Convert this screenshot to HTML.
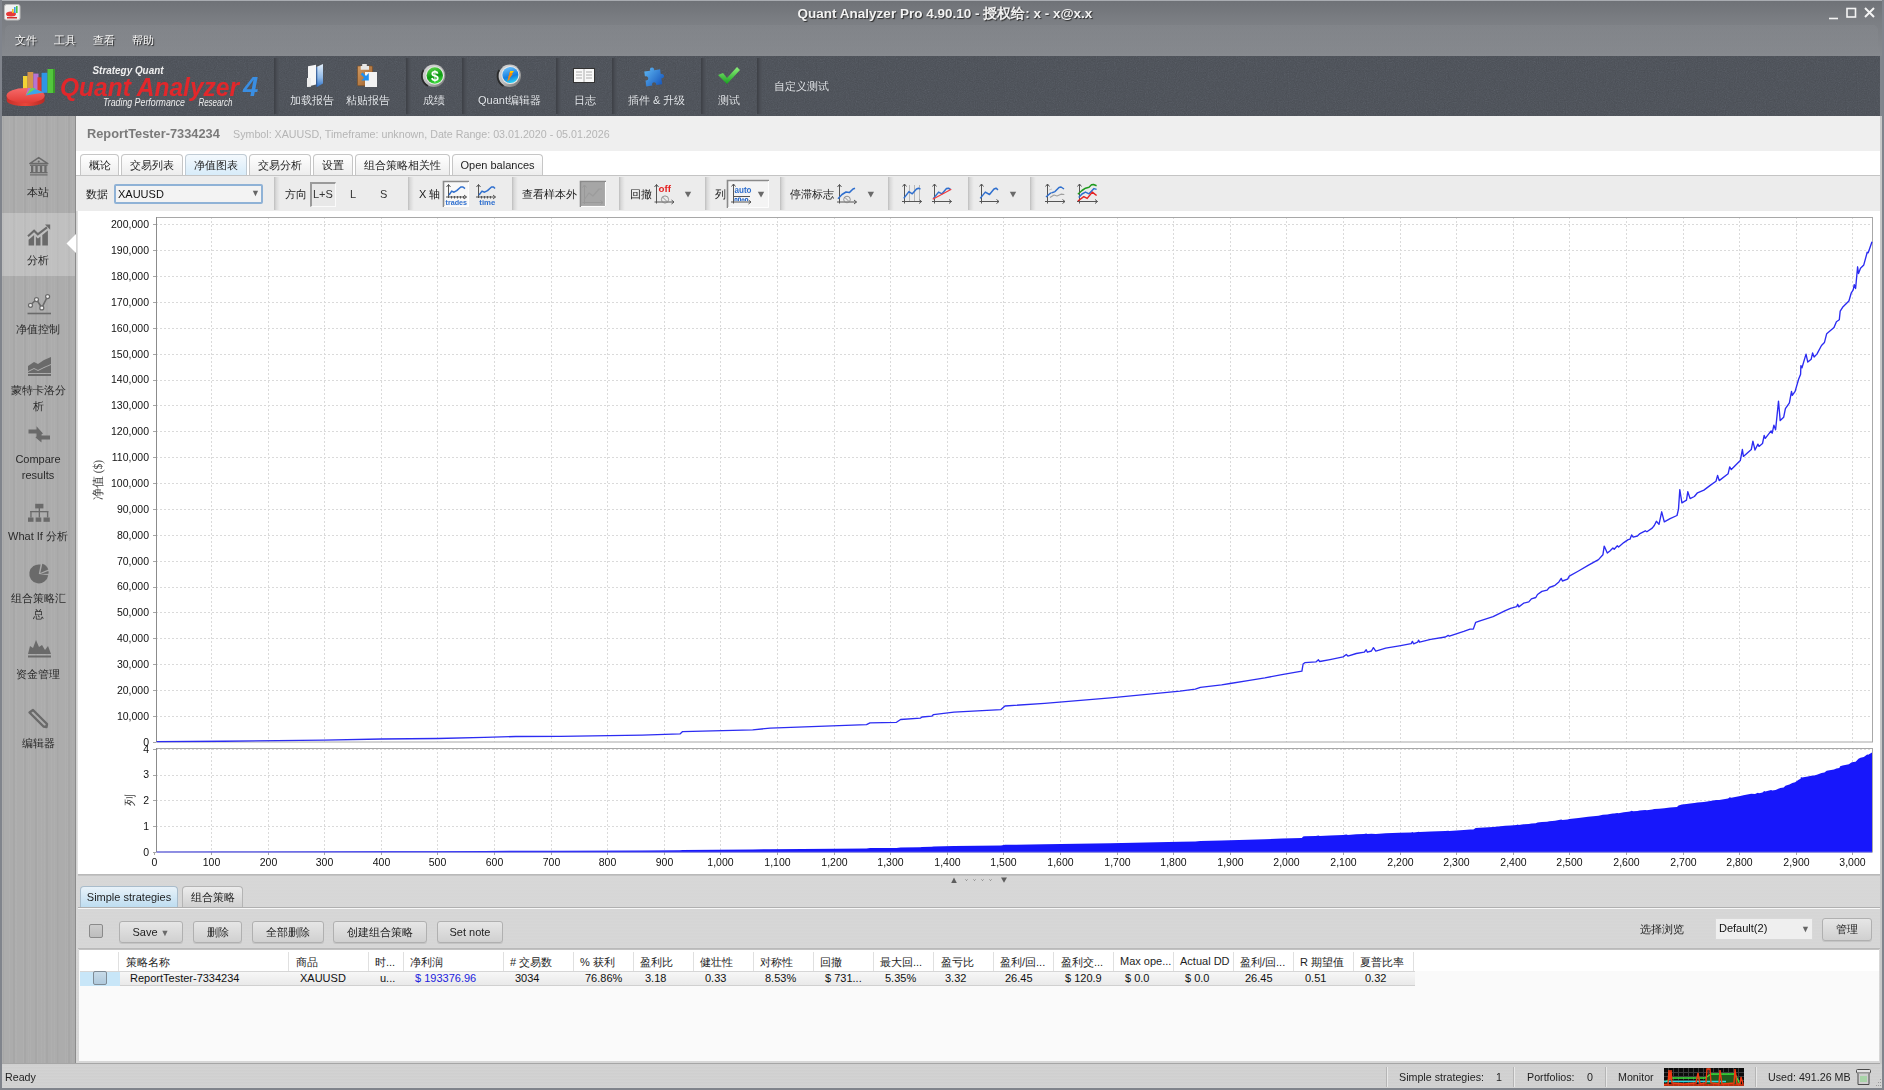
<!DOCTYPE html>
<html><head><meta charset="utf-8">
<style>
*{box-sizing:border-box;margin:0;padding:0}
html,body{width:1884px;height:1090px;overflow:hidden;background:#82868d;font-family:"Liberation Sans",sans-serif;font-size:11px;color:#222}
.a{position:absolute;white-space:nowrap}
#title{left:0;top:0;width:1884px;height:56px;background:linear-gradient(#6f7277 0,#7b7e83 20px,#878a8f 56px);border-top:1px solid #a9acb1}
#ttext{left:3px;top:5px;width:1884px;text-align:center;font-weight:bold;font-size:13.5px;color:#f2f2f2;text-shadow:1px 1px 1px #2e2e2e}
#menu{left:5px;top:25px;width:1873px;height:29px;border-radius:5px;background:linear-gradient(#8a8d92,#85888d);opacity:0.35}
.mi{top:33px;font-size:11px;color:#fafafa;text-shadow:1px 1px 1px #222}
#tb{left:2px;top:56px;width:1878px;height:60px;background:#4a4e55}
.sep{top:58px;width:5px;height:56px;background:linear-gradient(90deg,#3f4248 0,#3f4248 1px,#474a51 2px,#4d5158 4px,#4f535a 5px)}
.tl{top:93px;font-size:11px;color:#e4e8ee;text-align:center;text-shadow:0 0 1px #333}
#side{left:2px;top:116px;width:74px;height:948px;background:repeating-linear-gradient(90deg,rgba(255,255,255,.035) 0 1px,transparent 1px 7px),repeating-linear-gradient(90deg,rgba(0,0,0,.03) 0 2px,transparent 2px 11px),repeating-linear-gradient(90deg,rgba(255,255,255,.03) 0 1px,transparent 1px 13px),#acacac}
#sidesel{left:2px;top:213px;width:73px;height:63px;background:repeating-linear-gradient(90deg,rgba(255,255,255,.035) 0 1px,transparent 1px 7px),repeating-linear-gradient(90deg,rgba(0,0,0,.025) 0 2px,transparent 2px 11px),#c0c0c0}
.sl{left:2px;width:72px;text-align:center;font-size:11px;color:#2a2a2a;line-height:16px;white-space:normal}
#sideedge{left:75px;top:116px;width:3px;height:948px;background:linear-gradient(90deg,#8c8c8c 0,#8c8c8c 1px,#cfcfcf 1px,#e6e6e6 3px)}
#hdr{left:76px;top:116px;width:1806px;height:35px;background:#efefef}
#tabs{left:76px;top:151px;width:1806px;height:25px;background:#fff}
.tab{top:154px;height:22px;border:1px solid #c6c6c6;border-bottom:none;border-radius:4px 4px 0 0;background:linear-gradient(#ffffff,#ececec);text-align:center;line-height:21px;font-size:11px;color:#1e1e1e}
.tab.sel{background:linear-gradient(#f4f9fd,#d6ebf9);border-color:#c0cbd4}
#ctb{left:76px;top:175px;width:1806px;height:36px;background:#ececec;border-top:1px solid #c4c4c4}
.cs{top:177px;width:6px;height:33px;background:linear-gradient(90deg,#bdbdbd 0,#d8d8d8 2px,#e8e8e8 5px,#ececec)}
.ct{top:187px;font-size:11px;color:#1a1a1a}
#chart{left:78px;top:211px;width:1802px;height:664px;background:#fff}
#rgap{left:1880px;top:116px;width:2px;height:948px;background:#c8c8c8}
#rborder{left:1882px;top:0;width:2px;height:1090px;background:#80848c}
#bpanel{left:76px;top:874px;width:1806px;height:190px;background:repeating-linear-gradient(0deg,#d6d6d6 0,#d9d9d9 1px,#d5d5d5 2px,#d8d8d8 3px)}
.btab{top:886px;height:22px;border:1px solid #b4b4b4;border-bottom:none;border-radius:4px 4px 0 0;background:linear-gradient(#ececec,#cfcfcf);text-align:center;line-height:21px;font-size:11px;color:#1e1e1e}
.btab.sel{background:linear-gradient(#e8f2f9,#bcdcf0);border-color:#a9bccb}
#btb{left:78px;top:907px;width:1802px;height:42px;background:repeating-linear-gradient(0deg,#d6d6d6 0,#d8d8d8 1px,#d4d4d4 2px,#d7d7d7 3px);border-top:1px solid #b0b0b0;box-shadow:inset 0 1px 0 #f7f7f7;border-bottom:1px solid #b9b9b9}
.btn{top:921px;height:22px;border:1px solid #b0b0b0;border-radius:3px;background:linear-gradient(#e6e6e6,#d0d0d0);text-align:center;line-height:20px;font-size:11px;color:#1e1e1e;box-shadow:0 1px 0 #c4c4c4}
#table{left:79px;top:949px;width:1800px;height:112px;background:#fafafa;border-top:1px solid #c2c2c2}
.th{top:955px;font-size:11px;color:#1e1e1e}
.td{top:972px;font-size:11px;color:#111}
.csep{top:952px;width:1px;height:19px;background:#e0e0e0}
#status{left:2px;top:1063px;width:1880px;height:25px;background:repeating-linear-gradient(0deg,#d0d0d0 0,#d5d5d5 1px,#cdcdcd 2px,#d2d2d2 3px);border-top:1px solid #a6a6a6}
#bborder{left:0;top:1088px;width:1884px;height:2px;background:#80848c}
#lborder{left:0;top:0;width:2px;height:1090px;background:#80848c}
.st{top:1071px;font-size:10.7px;color:#1e1e1e}
.ssep{top:1067px;width:2px;height:20px;border-left:1px solid #b5b5b5;border-right:1px solid #e8e8e8}
</style></head><body>
<div id="title" class="a"></div>
<div id="ttext" class="a">Quant Analyzer Pro 4.90.10 - 授权给: x - x@x.x</div>
<!-- app icon -->
<svg class="a" style="left:4px;top:4px" width="17" height="17" viewBox="0 0 17 17">
<rect x="0.5" y="0.5" width="15.5" height="15.5" rx="2" fill="#f1f1f1" stroke="#bdbdbd"/>
<ellipse cx="7" cy="10" rx="5" ry="2.5" fill="#e63a3a"/>
<rect x="8" y="5" width="1.6" height="4" fill="#f2c02a"/><rect x="10" y="3" width="1.6" height="6" fill="#3aa0e6"/><rect x="12" y="2" width="1.6" height="7" fill="#4cc04a"/>
<rect x="3" y="13" width="10" height="1.5" fill="#d03030"/>
</svg>
<svg class="a" style="left:1825px;top:5px" width="55" height="16" viewBox="0 0 55 16">
<path d="M4 13.5H13" stroke="#f4f4f4" stroke-width="1.6"/>
<rect x="22" y="3.5" width="8.5" height="8.5" fill="none" stroke="#f4f4f4" stroke-width="1.6"/>
<path d="M40 3L49 12M49 3L40 12" stroke="#f4f4f4" stroke-width="2"/>
</svg>
<div id="menu" class="a"></div>
<div class="a mi" style="left:15px">文件</div>
<div class="a mi" style="left:54px">工具</div>
<div class="a mi" style="left:93px">查看</div>
<div class="a mi" style="left:132px">帮助</div>
<div id="tb" class="a"></div>
<svg class="a" style="left:2px;top:56px;opacity:0.35;mix-blend-mode:overlay" width="1878" height="60"><filter id="nz"><feTurbulence type="fractalNoise" baseFrequency="0.9" numOctaves="2" seed="3"/><feColorMatrix type="saturate" values="0"/></filter><rect width="1878" height="60" filter="url(#nz)"/></svg>
<!-- logo -->
<svg class="a" style="left:2px;top:56px" width="272" height="60" viewBox="2 56 272 60">
<defs>
<linearGradient id="pie" x1="0" y1="0" x2="0" y2="1"><stop offset="0" stop-color="#f66a6a"/><stop offset="1" stop-color="#e23b34"/></linearGradient>
<linearGradient id="pieside" x1="0" y1="0" x2="1" y2="0"><stop offset="0" stop-color="#c8302a"/><stop offset="0.5" stop-color="#e8463a"/><stop offset="1" stop-color="#b82a24"/></linearGradient>
</defs>
<rect x="23" y="76" width="4.6" height="14" fill="#f2d435"/>
<rect x="27.5" y="72" width="5.8" height="18" fill="#d4954a"/>
<rect x="33.3" y="73.6" width="5.2" height="17" fill="#b773d2"/>
<rect x="37.5" y="77.3" width="4.2" height="14" fill="#dd3b30"/>
<rect x="41.6" y="72.8" width="5.9" height="20" fill="#2f95e6"/>
<rect x="47.5" y="69" width="7.5" height="24" fill="#52c63c"/>
<rect x="53" y="69" width="2" height="24" fill="#3a9a2a"/>
<path d="M6.7 95.5V100.5C6.7 104 15 106 25.6 106S44.6 104 44.6 100.5V95.5Z" fill="url(#pieside)"/>
<ellipse cx="25.6" cy="95.5" rx="19" ry="7.5" fill="url(#pie)"/>
<path d="M25.6 95.5L33 88.3L44 92.5Z" fill="#3aa6ea"/>
<path d="M25.6 95.5L30 88.1L36 88.3Z" fill="#6ad35a"/>
<path d="M25.6 95.5L28 88.1L31 88.1Z" fill="#b773d2"/>
<text x="92.5" y="74.3" font-family="Liberation Sans" font-weight="bold" font-style="italic" font-size="10.5" fill="#efefef" textLength="71" lengthAdjust="spacingAndGlyphs">Strategy Quant</text>
<text x="60" y="96" font-family="Liberation Sans" font-weight="bold" font-style="italic" font-size="25" fill="#e2272b" textLength="179" lengthAdjust="spacingAndGlyphs">Quant Analyzer</text>
<text x="243" y="96" font-family="Liberation Sans" font-weight="bold" font-style="italic" font-size="27.5" fill="#3a8ee2">4</text>
<text x="103" y="106.3" font-family="Liberation Sans" font-style="italic" font-size="10" fill="#ececec" textLength="82" lengthAdjust="spacingAndGlyphs">Trading Performance</text>
<text x="198.4" y="106.3" font-family="Liberation Sans" font-style="italic" font-size="10" fill="#ececec" textLength="34" lengthAdjust="spacingAndGlyphs">Research</text>
</svg>
<div class="a sep" style="left:274px"></div>
<div class="a sep" style="left:406px"></div>
<div class="a sep" style="left:462px"></div>
<div class="a sep" style="left:556px"></div>
<div class="a sep" style="left:612px"></div>
<div class="a sep" style="left:701px"></div>
<div class="a sep" style="left:757px"></div>
<!-- toolbar icons -->
<svg class="a" style="left:300px;top:60px" width="480" height="32" viewBox="300 60 480 32">
<defs>
<linearGradient id="fold" x1="0" y1="0" x2="1" y2="0"><stop offset="0" stop-color="#fdfdfd"/><stop offset="1" stop-color="#dcdcdc"/></linearGradient>
<linearGradient id="foldb" x1="0" y1="0" x2="1" y2="0"><stop offset="0" stop-color="#3f82c8"/><stop offset="1" stop-color="#b9d6f0"/></linearGradient>
<radialGradient id="grn" cx="0.4" cy="0.35" r="0.7"><stop offset="0" stop-color="#7ce06a"/><stop offset="1" stop-color="#169a1a"/></radialGradient>
<radialGradient id="blu" cx="0.4" cy="0.35" r="0.7"><stop offset="0" stop-color="#9fd4fb"/><stop offset="1" stop-color="#1f86e0"/></radialGradient>
<linearGradient id="pz" x1="0" y1="0" x2="1" y2="1"><stop offset="0" stop-color="#5fb8f4"/><stop offset="1" stop-color="#1250b8"/></linearGradient>
<linearGradient id="chk" x1="0" y1="0" x2="0" y2="1"><stop offset="0" stop-color="#8ef07a"/><stop offset="1" stop-color="#18a020"/></linearGradient>
</defs>
<!-- folder 307-323, 64-86 -->
<linearGradient id="fb2" x1="0" y1="0" x2="0" y2="1"><stop offset="0" stop-color="#e2eefa"/><stop offset="0.6" stop-color="#8fb8e6"/><stop offset="1" stop-color="#2f72c8"/></linearGradient>
<path d="M316.5 67L323 64V83.5L317 87Z" fill="url(#fb2)"/>
<path d="M316.8 67V87" stroke="#2a5fa8" stroke-width="0.9"/>
<path d="M308 66.3L316 64.8V84.5L308 86.5Z" fill="#f6f6f6"/>
<path d="M307 78H311V86.7L307 87Z" fill="#ececec"/>
<!-- clipboard 357-377 -->
<linearGradient id="cbg" x1="0" y1="0" x2="1" y2="1"><stop offset="0" stop-color="#d29a62"/><stop offset="1" stop-color="#9c5f28"/></linearGradient>
<rect x="357.5" y="66" width="15" height="19.7" rx="1" fill="url(#cbg)" stroke="#7a4a1e" stroke-width="0.6"/>
<path d="M362.2 64H366.8V66H369V69.7H360.7V66H362.2Z" fill="#e6e6e6"/>
<rect x="365" y="72" width="12" height="15" fill="#f2f2f2"/>
<path d="M360.7 74.3L362.6 72.5L366 75.9L368.8 73.1V80.5H361.4L364.2 77.7Z" fill="#1f8ff0"/>
<!-- dollar coin -->
<linearGradient id="ring" x1="0" y1="0" x2="1" y2="1"><stop offset="0" stop-color="#d8d8d8"/><stop offset="0.5" stop-color="#bdbdbd"/><stop offset="1" stop-color="#6a6a6a"/></linearGradient>
<linearGradient id="grn2" x1="0.3" y1="0" x2="0.6" y2="1"><stop offset="0" stop-color="#5ad24a"/><stop offset="0.55" stop-color="#0e9a12"/><stop offset="1" stop-color="#40e040"/></linearGradient>
<linearGradient id="blu2" x1="0.3" y1="0" x2="0.6" y2="1"><stop offset="0" stop-color="#6cc0fa"/><stop offset="0.6" stop-color="#137ee0"/><stop offset="1" stop-color="#2ed4f4"/></linearGradient>
<circle cx="434" cy="75.8" r="11.3" fill="url(#ring)"/>
<path d="M423.5 70A11.3 11.3 0 0 0 428 86" stroke="#2a2a2a" stroke-width="1.6" fill="none"/>
<circle cx="434.8" cy="75.5" r="9.3" fill="#e8e8e8"/>
<circle cx="434.8" cy="75.5" r="8.2" fill="url(#grn2)"/>
<text x="435" y="80.6" text-anchor="middle" font-family="Liberation Sans" font-weight="bold" font-size="14" fill="#fff">$</text>
<!-- globe -->
<circle cx="509.8" cy="75.8" r="11.2" fill="url(#ring)"/>
<path d="M499.3 70A11.2 11.2 0 0 0 503.5 86" stroke="#2a2a2a" stroke-width="1.6" fill="none"/>
<circle cx="510.4" cy="75" r="9.1" fill="#e8e8e8"/>
<circle cx="510.4" cy="75" r="8" fill="url(#blu2)"/>
<path d="M510.2 71H513.8L512 73.5L512.8 74L509.5 78.5L510 79L507.2 81.6L508.5 77.5L508 77L509.5 74.5L509 74Z" fill="#f48a10"/>
<path d="M510.2 71H513.8L512.5 72.8H510Z" fill="#ffd000"/>
<!-- book 573-595, 68-83 -->
<rect x="573.5" y="68.5" width="21" height="14" fill="#f8f8f8" stroke="#333" stroke-width="1"/>
<path d="M584 69V82M576 72H582M576 75H582M576 78H582M586 72H592M586 75H592M586 78H592" stroke="#999" stroke-width="0.8"/>
<!-- puzzle 644-668, 66-85 -->
<path d="M645 70H651C650 66 656 66 655 70H661V75C665 74 665 80 661 79V85H655C656 81 650 81 651 85H645V79C649 80 649 74 645 75Z" fill="url(#pz)" transform="rotate(-8 656 76)"/>
<!-- check 718-739, 67-84 -->
<path d="M718 75L723 73L727 78L737 67L740 70L727 84Z" fill="url(#chk)"/>
</svg>
<div class="a tl" style="left:290px;top:93px">加载报告</div>
<div class="a tl" style="left:346px;top:93px">粘贴报告</div>
<div class="a tl" style="left:423px;top:93px">成绩</div>
<div class="a tl" style="left:478px;top:93px">Quant编辑器</div>
<div class="a tl" style="left:574px;top:93px">日志</div>
<div class="a tl" style="left:628px;top:93px">插件 &amp; 升级</div>
<div class="a tl" style="left:718px;top:93px">测试</div>
<div class="a tl" style="left:774px;top:79px">自定义测试</div>
<div id="side" class="a"></div>
<div id="sidesel" class="a"></div>
<div id="sideedge" class="a"></div>
<svg class="a" style="left:2px;top:116px" width="74" height="640" viewBox="2 116 74 640">
<g fill="#6a6a6a" stroke="none">
<!-- bank -->
<path d="M29.8 163.6L38.7 157.6L47.8 163.6Z" fill="none" stroke="#6a6a6a" stroke-width="1.5" stroke-linejoin="round"/>
<circle cx="38.7" cy="161.6" r="1.1"/>
<rect x="30" y="164.6" width="17.5" height="1.3"/>
<rect x="31" y="166" width="2.3" height="6.2"/><rect x="35.4" y="166" width="2.3" height="6.2"/><rect x="39.9" y="166" width="2.3" height="6.2"/><rect x="44.3" y="166" width="2.3" height="6.2"/>
<rect x="30" y="172" width="17.5" height="1.3"/>
<rect x="30" y="174.3" width="17.5" height="1.2"/>
<!-- analysis -->
<path d="M28 236.3L34.1 230.8L37.8 234.3L47 227.3" fill="none" stroke="#6a6a6a" stroke-width="2.1"/>
<path d="M45 224.6H50.2V229.8Z"/>
<path d="M28.6 239.8L34.1 235V245.5H28.6Z"/><path d="M35.9 236.8L38 238.4L40.5 236.5V245.5H35.9Z"/><path d="M42.3 235L47.9 230.6V245.5H42.3Z"/>
<!-- monte carlo area 28-51, 357-373 -->
<path d="M28 366L34 362L38 364L44 360L51 357V364L44 367L38 370L34 368L28 371Z"/>
<path d="M28 372L34 369L38 371L44 368L51 365V373H28Z"/>
<rect x="28" y="374" width="23" height="2"/>
<!-- compare arrows -->
<path d="M28.5 429.5H36.5V426.3L43 433.5L36.5 437V433.5H28.5Z"/>
<path d="M50 435.6H41.5V432L35.5 437.5L41.5 442.5V439.5H50Z"/>
<!-- what if org -->
<rect x="35.2" y="503.8" width="8.2" height="4.6"/>
<rect x="38.7" y="508" width="1.3" height="3.2"/>
<rect x="30.3" y="511" width="18" height="1.3"/>
<rect x="30.3" y="511" width="1.3" height="6.5"/><rect x="38.7" y="511" width="1.3" height="6.5"/><rect x="47" y="511" width="1.3" height="6.5"/>
<rect x="28" y="517.5" width="5.5" height="4.3"/><rect x="35.7" y="517.5" width="5.6" height="4.3"/><rect x="43.5" y="517.5" width="6.3" height="4.3"/>
<!-- pie -->
<path d="M38.8 574L40.6 564.6A9.5 9.5 0 1 0 48.2 575.2Z"/>
<path d="M40.3 573L42.3 563.8A9.5 9.5 0 0 1 48.3 569.4Z"/>
<path d="M40.5 574L48.4 571A9.5 9.5 0 0 1 48.5 573.8Z"/>
<!-- money area 28-51, 640-657 -->
<path d="M28 654L30 646L33 648L36 640L39 647L42 645L45 650L48 646L51 654Z"/>
<rect x="28" y="655.5" width="23" height="2"/>
<!-- pencil 30-48, 709-727 -->
<path d="M33 710L47 724L46.5 727L43.5 726.5L29.5 712.5Z" fill="none" stroke="#6a6a6a" stroke-width="2.4" stroke-linejoin="round"/>
</g>
<!-- net value control -->
<path d="M30.5 305L36.5 299.5L41.8 307.8L47.5 296.5" stroke="#6a6a6a" stroke-width="1.6" fill="none"/>
<g fill="#f0f0f0" stroke="#6a6a6a" stroke-width="1.2"><circle cx="30.5" cy="305.3" r="2"/><circle cx="36.5" cy="299.6" r="2"/><circle cx="41.8" cy="307.9" r="2"/><circle cx="47.6" cy="296.6" r="2"/></g>
<rect x="27.5" y="312.7" width="23.5" height="1.6" fill="#6a6a6a"/>
<!-- pointer -->
<path d="M76 234V253L66.5 243.5Z" fill="#fff"/>
</svg>
<div class="a sl" style="top:184px">本站</div>
<div class="a sl" style="top:252px">分析</div>
<div class="a sl" style="top:321px">净值控制</div>
<div class="a sl" style="top:382px">蒙特卡洛分<br>析</div>
<div class="a sl" style="top:451px">Compare<br>results</div>
<div class="a sl" style="top:528px">What If 分析</div>
<div class="a sl" style="top:590px">组合策略汇<br>总</div>
<div class="a sl" style="top:666px">资金管理</div>
<div class="a sl" style="top:735px">编辑器</div>
<div id="hdr" class="a"></div>
<div class="a" style="left:87px;top:126px;font-size:12.8px;font-weight:bold;color:#7a7a7a">ReportTester-7334234</div>
<div class="a" style="left:233px;top:128px;font-size:10.7px;color:#b5b5b5">Symbol: XAUUSD, Timeframe: unknown, Date Range: 03.01.2020 - 05.01.2026</div>
<div id="tabs" class="a"></div>
<div class="a tab" style="left:80px;width:39px">概论</div>
<div class="a tab" style="left:121px;width:62px">交易列表</div>
<div class="a tab sel" style="left:185px;width:62px">净值图表</div>
<div class="a tab" style="left:249px;width:62px">交易分析</div>
<div class="a tab" style="left:313px;width:40px">设置</div>
<div class="a tab" style="left:355px;width:95px">组合策略相关性</div>
<div class="a tab" style="left:452px;width:91px">Open balances</div>
<div id="ctb" class="a"></div>
<div class="a cs" style="left:274px"></div>
<div class="a cs" style="left:408px"></div>
<div class="a cs" style="left:512px"></div>
<div class="a cs" style="left:619px"></div>
<div class="a cs" style="left:705px"></div>
<div class="a cs" style="left:780px"></div>
<div class="a cs" style="left:888px"></div>
<div class="a cs" style="left:968px"></div>
<div class="a cs" style="left:1030px"></div>
<div class="a ct" style="left:86px">数据</div>
<div class="a" style="left:114px;top:184px;width:149px;height:20px;border:2px solid #8fb2d6;border-radius:2px;background:#f3f3f3"></div>
<div class="a" style="left:118px;top:188px;font-size:11px;color:#111">XAUUSD</div>
<div class="a" style="left:251px;top:188px;font-size:9px;color:#666">▼</div>
<div class="a ct" style="left:285px">方向</div>
<div class="a" style="left:310px;top:182px;width:26px;height:25px;border-left:2px solid #9a9a9a;border-top:2px solid #9a9a9a;border-right:1px solid #fafafa;border-bottom:1px solid #fafafa;background:#e8e8e8"></div>
<div class="a ct" style="left:313px;top:188px;color:#333">L+S</div>
<div class="a ct" style="left:350px;top:188px;color:#333">L</div>
<div class="a ct" style="left:380px;top:188px;color:#333">S</div>
<div class="a ct" style="left:419px">X 轴</div>
<div class="a ct" style="left:522px">查看样本外</div>
<div class="a ct" style="left:630px">回撤</div>
<div class="a ct" style="left:715px">列</div>
<div class="a ct" style="left:790px">停滞标志</div>
<svg class="a" style="left:440px;top:178px" width="660" height="32" viewBox="440 178 660 32">
<rect x="443" y="181" width="26" height="26" fill="#f8f8f8"/><path d="M443.5 207V181.5H469" stroke="#8a8a8a" stroke-width="1.6" fill="none"/><path d="M468.5 182V206.5H444" stroke="#fdfdfd" stroke-width="1" fill="none"/>
<path d="M448.5 184.5V198M446 197.0H466.5" stroke="#555" stroke-width="1" fill="none"/><path d="M446.5 187.0L448.5 184.5L450.5 187.0" stroke="#555" stroke-width="1" fill="none"/><path d="M464.0 195.0L466.5 197.0L464.0 199.0" stroke="#555" stroke-width="1" fill="none"/><path d="M451.5 196.0V198.5M454.5 196.0V198.5M457.5 196.0V198.5M460.5 196.0V198.5M463.5 196.0V198.5" stroke="#555" stroke-width="1"/>
<path d="M449 195 L451.7 191.1 L454 192.2 L456.7 190.6 L460.8 187 L463 187 L465 188.6" stroke="#2f6fce" stroke-width="1.5" fill="none" stroke-linejoin="round"/>
<text x="445.5" y="204.5" font-family="Liberation Sans" font-weight="bold" font-size="7.2" fill="#2f6fce" textLength="21.5" lengthAdjust="spacingAndGlyphs">trades</text>
<path d="M478.5 184.5V198M476 197.0H495.5" stroke="#555" stroke-width="1" fill="none"/><path d="M476.5 187.0L478.5 184.5L480.5 187.0" stroke="#555" stroke-width="1" fill="none"/><path d="M493.0 195.0L495.5 197.0L493.0 199.0" stroke="#555" stroke-width="1" fill="none"/><path d="M481.5 196.0V198.5M484.5 196.0V198.5M487.5 196.0V198.5M490.5 196.0V198.5" stroke="#555" stroke-width="1"/>
<path d="M479 195 L482 191.1 L484.5 192.2 L487.5 190.6 L491.5 187 L493.5 187 L495 188.6" stroke="#2f6fce" stroke-width="1.5" fill="none" stroke-linejoin="round"/>
<text x="479.3" y="204.5" font-family="Liberation Sans" font-weight="bold" font-size="7.2" fill="#2f6fce" textLength="16" lengthAdjust="spacingAndGlyphs">time</text>
<rect x="580" y="181" width="26" height="26" fill="#ababab"/><path d="M580.5 207V181.5H606" stroke="#8a8a8a" stroke-width="1.6" fill="none"/><path d="M605.5 182V206.5H581" stroke="#fdfdfd" stroke-width="1" fill="none"/>
<rect x="582" y="183" width="22" height="22" fill="#a6a6a6"/>
<path d="M584.5 185V204M582.5 202.5H603" stroke="#999" stroke-width="1" fill="none"/><path d="M582.5 187.5L584.5 185L586.5 187.5" stroke="#999" stroke-width="1" fill="none"/><path d="M600.5 200.5L603 202.5L600.5 204.5" stroke="#999" stroke-width="1" fill="none"/>
<path d="M584 200 L589 193 L593 196 L599 189 L602 189" stroke="#9c9c9c" stroke-width="1.2" fill="none" stroke-linejoin="round"/>
<path d="M656.5 184.5V203.5M654.5 202.0H674" stroke="#555" stroke-width="1" fill="none"/><path d="M654.5 187.0L656.5 184.5L658.5 187.0" stroke="#555" stroke-width="1" fill="none"/><path d="M671.5 200.0L674 202.0L671.5 204.0" stroke="#555" stroke-width="1" fill="none"/>
<text x="658.5" y="192.3" font-family="Liberation Sans" font-weight="bold" font-size="8.6" fill="#e52020" textLength="12.5" lengthAdjust="spacingAndGlyphs">off</text>
<circle cx="665" cy="199.5" r="3.6" fill="none" stroke="#888" stroke-width="0.9"/><path d="M662.5 197L667.5 202" stroke="#888" stroke-width="0.9"/>
<rect x="727" y="180" width="42" height="28" fill="#f4f4f4"/><path d="M727.5 208V180.5H769" stroke="#8a8a8a" stroke-width="1.6" fill="none"/><path d="M768.5 181V207.5H728" stroke="#fdfdfd" stroke-width="1" fill="none"/>
<path d="M733.5 184V203.5M731 202.0H751" stroke="#555" stroke-width="1" fill="none"/><path d="M731.5 186.5L733.5 184L735.5 186.5" stroke="#555" stroke-width="1" fill="none"/><path d="M748.5 200.0L751 202.0L748.5 204.0" stroke="#555" stroke-width="1" fill="none"/>
<text x="734.5" y="192.6" font-family="Liberation Sans" font-weight="bold" font-size="8.4" fill="#2f6fce" textLength="17" lengthAdjust="spacingAndGlyphs">auto</text>
<path d="M733 196.5H750" stroke="#555" stroke-width="1"/>
<path d="M735 201V198.5H737V201M738.5 201V198H740.5V201M742 201V199H744V201M745.5 201V198.5H747.5V201" stroke="#2f6fce" stroke-width="1" fill="none"/>
<path d="M839.5 184.5V203.5M837 202.0H856.5" stroke="#555" stroke-width="1" fill="none"/><path d="M837.5 187.0L839.5 184.5L841.5 187.0" stroke="#555" stroke-width="1" fill="none"/><path d="M854.0 200.0L856.5 202.0L854.0 204.0" stroke="#555" stroke-width="1" fill="none"/>
<path d="M838 198.8 L842 194.5 L846 192 L849.3 192.6 L853 189 L855 188.2" stroke="#2f6fce" stroke-width="1.5" fill="none" stroke-linejoin="round"/>
<circle cx="847" cy="199.5" r="3.3" fill="none" stroke="#888" stroke-width="0.9"/><path d="M844.8 197.3L849.2 201.7" stroke="#888" stroke-width="0.9"/>
<path d="M904.5 184V203.5M902 201.5H921.6" stroke="#555" stroke-width="1" fill="none"/><path d="M902.5 186.5L904.5 184L906.5 186.5" stroke="#555" stroke-width="1" fill="none"/><path d="M919.1 199.5L921.6 201.5L919.1 203.5" stroke="#555" stroke-width="1" fill="none"/>
<path d="M909.5 185V201M914.5 185V201M919.5 185V201" stroke="#aaa" stroke-width="0.8"/>
<path d="M903.8 198.4 L908.9 191.6 L912.3 193.8 L916.5 189 L918.5 188.2 L920.5 189.2" stroke="#2f6fce" stroke-width="1.5" fill="none" stroke-linejoin="round"/>
<path d="M934.5 184V203.5M932 201.5H951.5" stroke="#555" stroke-width="1" fill="none"/><path d="M932.5 186.5L934.5 184L936.5 186.5" stroke="#555" stroke-width="1" fill="none"/><path d="M949.0 199.5L951.5 201.5L949.0 203.5" stroke="#555" stroke-width="1" fill="none"/>
<path d="M933.5 198.4 L938.6 192.1 L942 193.8 L946.5 188.6 L948.5 188.2 L950.5 189.5" stroke="#2f6fce" stroke-width="1.5" fill="none" stroke-linejoin="round"/>
<path d="M932.7 199.2 L951.3 189.2" stroke="#f03a3a" stroke-width="1.3" fill="none" stroke-linejoin="round"/>
<path d="M981.5 184V203.5M979.5 201.5H999" stroke="#555" stroke-width="1" fill="none"/><path d="M979.5 186.5L981.5 184L983.5 186.5" stroke="#555" stroke-width="1" fill="none"/><path d="M996.5 199.5L999 201.5L996.5 203.5" stroke="#555" stroke-width="1" fill="none"/>
<path d="M980.2 198.4 L985.3 192.1 L989.5 194.5 L994 189 L996 188.2 L998 189.8" stroke="#2f6fce" stroke-width="1.5" fill="none" stroke-linejoin="round"/>
<path d="M1047.5 184V203.5M1045 201.5H1065" stroke="#555" stroke-width="1" fill="none"/><path d="M1045.5 186.5L1047.5 184L1049.5 186.5" stroke="#555" stroke-width="1" fill="none"/><path d="M1062.5 199.5L1065 201.5L1062.5 203.5" stroke="#555" stroke-width="1" fill="none"/>
<path d="M1046 197 L1050 193.5 L1055 191.6 L1059 187.5 L1061 187 L1064 189" stroke="#2f6fce" stroke-width="1.5" fill="none" stroke-linejoin="round"/>
<path d="M1050 197.5 L1054 195 L1057 196 L1061 194.2 L1064.3 194.5" stroke="#a0a0a0" stroke-width="1.2" fill="none" stroke-linejoin="round"/>
<path d="M1049 190L1052 189M1051 193L1053 194" stroke="#c8c8c8" stroke-width="1"/>
<path d="M1079.5 184V203.5M1077 201.5H1097.5" stroke="#555" stroke-width="1" fill="none"/><path d="M1077.5 186.5L1079.5 184L1081.5 186.5" stroke="#555" stroke-width="1" fill="none"/><path d="M1095.0 199.5L1097.5 201.5L1095.0 203.5" stroke="#555" stroke-width="1" fill="none"/>
<path d="M1077.9 194.2 L1082 190.5 L1085.5 188.2 L1089 187.2 L1091.5 184.8 L1093.5 184.5 L1096.6 185.7" stroke="#1e9a1e" stroke-width="1.5" fill="none" stroke-linejoin="round"/>
<path d="M1078.7 197.6 L1082 194 L1085.5 192.1 L1089 193.8 L1094 188.6 L1096.6 189.4" stroke="#2f6fce" stroke-width="1.5" fill="none" stroke-linejoin="round"/>
<path d="M1077.9 201 L1083.8 196.7 L1087.2 198.4 L1092.3 192.1 L1096.6 195.5" stroke="#e52222" stroke-width="1.5" fill="none" stroke-linejoin="round"/>
<path d="M684.8 191.8H691.2L688 197.5Z" fill="#6a6a6a"/>
<path d="M757.8 191.8H764.2L761 197.5Z" fill="#6a6a6a"/>
<path d="M867.5999999999999 191.8H874.0L870.8 197.5Z" fill="#6a6a6a"/>
<path d="M1009.8 191.8H1016.2L1013 197.5Z" fill="#6a6a6a"/>
</svg>
<div id="chart" class="a"></div>
<svg class="a" style="left:0;top:0" width="1884" height="1090" viewBox="0 0 1884 1090">
<path d="M157 716.5H1872 M157 690.5H1872 M157 664.5H1872 M157 638.5H1872 M157 612.5H1872 M157 587.5H1872 M157 561.5H1872 M157 535.5H1872 M157 509.5H1872 M157 483.5H1872 M157 457.5H1872 M157 431.5H1872 M157 405.5H1872 M157 380.5H1872 M157 354.5H1872 M157 328.5H1872 M157 302.5H1872 M157 276.5H1872 M157 250.5H1872 M157 224.5H1872 M211.5 218V742 M211.5 749V852 M268.5 218V742 M268.5 749V852 M324.5 218V742 M324.5 749V852 M381.5 218V742 M381.5 749V852 M437.5 218V742 M437.5 749V852 M494.5 218V742 M494.5 749V852 M551.5 218V742 M551.5 749V852 M607.5 218V742 M607.5 749V852 M664.5 218V742 M664.5 749V852 M720.5 218V742 M720.5 749V852 M777.5 218V742 M777.5 749V852 M834.5 218V742 M834.5 749V852 M890.5 218V742 M890.5 749V852 M947.5 218V742 M947.5 749V852 M1003.5 218V742 M1003.5 749V852 M1060.5 218V742 M1060.5 749V852 M1117.5 218V742 M1117.5 749V852 M1173.5 218V742 M1173.5 749V852 M1230.5 218V742 M1230.5 749V852 M1286.5 218V742 M1286.5 749V852 M1343.5 218V742 M1343.5 749V852 M1400.5 218V742 M1400.5 749V852 M1456.5 218V742 M1456.5 749V852 M1513.5 218V742 M1513.5 749V852 M1569.5 218V742 M1569.5 749V852 M1626.5 218V742 M1626.5 749V852 M1683.5 218V742 M1683.5 749V852 M1739.5 218V742 M1739.5 749V852 M1796.5 218V742 M1796.5 749V852 M1852.5 218V742 M1852.5 749V852 M157 826.5H1872 M157 800.5H1872 M157 775.5H1872 M157 749.5H1872" stroke="#dadada" stroke-width="1" stroke-dasharray="2 2" stroke-dashoffset="1" fill="none"/>
<path d="M153 742.5H156 M153 716.5H156 M153 690.5H156 M153 664.5H156 M153 638.5H156 M153 612.5H156 M153 587.5H156 M153 561.5H156 M153 535.5H156 M153 509.5H156 M153 483.5H156 M153 457.5H156 M153 431.5H156 M153 405.5H156 M153 380.5H156 M153 354.5H156 M153 328.5H156 M153 302.5H156 M153 276.5H156 M153 250.5H156 M153 224.5H156 M153 852.5H156 M153 826.5H156 M153 800.5H156 M153 775.5H156 M153 749.5H156 M154.5 852V855 M211.5 852V855 M268.5 852V855 M324.5 852V855 M381.5 852V855 M437.5 852V855 M494.5 852V855 M551.5 852V855 M607.5 852V855 M664.5 852V855 M720.5 852V855 M777.5 852V855 M834.5 852V855 M890.5 852V855 M947.5 852V855 M1003.5 852V855 M1060.5 852V855 M1117.5 852V855 M1173.5 852V855 M1230.5 852V855 M1286.5 852V855 M1343.5 852V855 M1400.5 852V855 M1456.5 852V855 M1513.5 852V855 M1569.5 852V855 M1626.5 852V855 M1683.5 852V855 M1739.5 852V855 M1796.5 852V855 M1852.5 852V855" stroke="#a6a6a6" stroke-width="1" fill="none"/>
<rect x="156.5" y="217.5" width="1716" height="524.5" fill="none" stroke="#a8a8a8"/>
<rect x="156.5" y="748.5" width="1716" height="103.5" fill="none" stroke="#a8a8a8"/>
<path d="M156.5 217V742M156.5 748V852" stroke="#8c8c8c"/>
<g font-family="Liberation Sans" font-size="10.5" fill="#111"><text x="149" y="745.6" text-anchor="end">0</text><text x="149" y="719.7" text-anchor="end">10,000</text><text x="149" y="693.8" text-anchor="end">20,000</text><text x="149" y="668.0" text-anchor="end">30,000</text><text x="149" y="642.1" text-anchor="end">40,000</text><text x="149" y="616.2" text-anchor="end">50,000</text><text x="149" y="590.3" text-anchor="end">60,000</text><text x="149" y="564.5" text-anchor="end">70,000</text><text x="149" y="538.6" text-anchor="end">80,000</text><text x="149" y="512.7" text-anchor="end">90,000</text><text x="149" y="486.8" text-anchor="end">100,000</text><text x="149" y="461.0" text-anchor="end">110,000</text><text x="149" y="435.1" text-anchor="end">120,000</text><text x="149" y="409.2" text-anchor="end">130,000</text><text x="149" y="383.3" text-anchor="end">140,000</text><text x="149" y="357.5" text-anchor="end">150,000</text><text x="149" y="331.6" text-anchor="end">160,000</text><text x="149" y="305.7" text-anchor="end">170,000</text><text x="149" y="279.8" text-anchor="end">180,000</text><text x="149" y="254.0" text-anchor="end">190,000</text><text x="149" y="228.1" text-anchor="end">200,000</text><text x="149" y="855.7" text-anchor="end">0</text><text x="149" y="829.9" text-anchor="end">1</text><text x="149" y="804.2" text-anchor="end">2</text><text x="149" y="778.4" text-anchor="end">3</text><text x="149" y="752.7" text-anchor="end">4</text><text x="154.5" y="866" text-anchor="middle">0</text><text x="211.5" y="866" text-anchor="middle">100</text><text x="268.5" y="866" text-anchor="middle">200</text><text x="324.5" y="866" text-anchor="middle">300</text><text x="381.5" y="866" text-anchor="middle">400</text><text x="437.5" y="866" text-anchor="middle">500</text><text x="494.5" y="866" text-anchor="middle">600</text><text x="551.5" y="866" text-anchor="middle">700</text><text x="607.5" y="866" text-anchor="middle">800</text><text x="664.5" y="866" text-anchor="middle">900</text><text x="720.5" y="866" text-anchor="middle">1,000</text><text x="777.5" y="866" text-anchor="middle">1,100</text><text x="834.5" y="866" text-anchor="middle">1,200</text><text x="890.5" y="866" text-anchor="middle">1,300</text><text x="947.5" y="866" text-anchor="middle">1,400</text><text x="1003.5" y="866" text-anchor="middle">1,500</text><text x="1060.5" y="866" text-anchor="middle">1,600</text><text x="1117.5" y="866" text-anchor="middle">1,700</text><text x="1173.5" y="866" text-anchor="middle">1,800</text><text x="1230.5" y="866" text-anchor="middle">1,900</text><text x="1286.5" y="866" text-anchor="middle">2,000</text><text x="1343.5" y="866" text-anchor="middle">2,100</text><text x="1400.5" y="866" text-anchor="middle">2,200</text><text x="1456.5" y="866" text-anchor="middle">2,300</text><text x="1513.5" y="866" text-anchor="middle">2,400</text><text x="1569.5" y="866" text-anchor="middle">2,500</text><text x="1626.5" y="866" text-anchor="middle">2,600</text><text x="1683.5" y="866" text-anchor="middle">2,700</text><text x="1739.5" y="866" text-anchor="middle">2,800</text><text x="1796.5" y="866" text-anchor="middle">2,900</text><text x="1852.5" y="866" text-anchor="middle">3,000</text></g>
<path d="M156.7 741.6 L223.6 741.2 L323.9 740.1 L381.8 739.0 L437.6 738.5 L484.4 737.4 L515.6 736.5 L560.0 736.3 L642.3 735.1 L680.0 733.9 L682.6 731.6 L752.7 729.9 L770.2 728.1 L866.5 724.6 L870.0 722.9 L896.5 722.3 L900.6 719.5 L920.3 718.2 L922.0 717.0 L931.8 716.2 L933.5 714.6 L954.0 712.1 L1001.0 709.6 L1005.0 706.0 L1044.6 703.4 L1110.4 697.8 L1180.0 691.2 L1195.3 689.2 L1200.4 687.4 L1221.6 684.8 L1230.1 683.5 L1247.9 680.6 L1264.9 677.9 L1281.9 674.6 L1301.9 671.2 L1303.1 664.0 L1304.8 662.7 L1315.9 661.9 L1318.4 659.8 L1319.7 661.5 L1330.0 659.6 L1343.1 656.9 L1346.3 654.5 L1347.9 656.1 L1356.3 653.5 L1364.2 652.2 L1366.2 649.8 L1367.4 652.2 L1371.4 651.0 L1373.4 647.6 L1375.8 651.1 L1385.7 648.2 L1399.3 645.8 L1411.2 643.6 L1412.4 641.4 L1413.6 643.8 L1417.6 642.2 L1418.5 640.2 L1419.6 642.2 L1430.7 639.4 L1445.4 637.0 L1448.2 635.4 L1449.4 636.2 L1463.8 631.4 L1470.1 629.1 L1473.3 629.1 L1475.7 622.3 L1480.0 620.8 L1493.1 616.7 L1505.3 610.6 L1510.5 608.4 L1516.6 606.7 L1517.7 604.3 L1518.8 606.9 L1523.6 603.2 L1528.8 601.9 L1531.4 598.9 L1535.8 597.5 L1537.5 594.5 L1541.9 591.4 L1547.1 590.1 L1549.3 587.5 L1555.0 585.3 L1558.9 581.9 L1561.2 578.4 L1562.4 581.0 L1567.6 579.2 L1569.3 576.2 L1578.5 571.0 L1588.1 565.3 L1598.5 559.6 L1602.9 554.8 L1604.2 546.1 L1607.3 553.1 L1609.9 550.9 L1612.9 547.9 L1614.2 549.2 L1617.3 545.7 L1618.6 547.0 L1623.8 542.6 L1628.2 539.6 L1630.0 539.2 L1631.6 535.0 L1633.2 537.1 L1637.4 536.0 L1639.5 533.9 L1645.3 530.8 L1646.9 531.8 L1652.2 528.1 L1654.3 525.5 L1656.4 521.3 L1659.0 524.4 L1661.7 511.8 L1664.3 521.8 L1670.1 518.6 L1677.0 515.5 L1678.5 509.1 L1679.8 489.6 L1681.9 502.8 L1686.5 500.2 L1687.8 491.7 L1690.1 498.6 L1694.4 496.5 L1697.5 492.8 L1703.9 490.1 L1710.2 485.4 L1716.0 481.2 L1717.6 475.4 L1719.2 480.6 L1728.1 473.8 L1729.7 466.9 L1731.3 469.6 L1740.3 460.6 L1742.4 449.5 L1743.4 456.4 L1751.3 449.5 L1752.9 441.1 L1755.0 450.0 L1757.9 444.1 L1759.0 446.4 L1762.5 443.5 L1764.2 435.5 L1765.3 438.4 L1771.1 430.9 L1772.2 433.2 L1773.9 425.2 L1775.6 429.8 L1778.5 401.1 L1780.2 420.6 L1783.7 417.2 L1785.4 408.6 L1789.4 402.8 L1791.5 391.4 L1792.3 395.4 L1795.1 391.4 L1798.6 379.3 L1800.6 374.2 L1800.9 365.6 L1802.0 367.8 L1806.0 354.1 L1807.8 362.1 L1811.2 359.2 L1812.6 352.9 L1814.1 357.0 L1816.9 354.1 L1821.5 345.5 L1824.4 342.6 L1826.7 333.7 L1829.6 331.3 L1834.0 327.5 L1836.4 321.7 L1839.3 319.8 L1840.2 311.1 L1842.6 307.3 L1848.9 301.0 L1851.3 292.8 L1853.2 289.9 L1854.2 284.6 L1855.6 288.5 L1857.6 266.8 L1858.5 273.5 L1860.5 268.2 L1863.8 264.9 L1867.2 252.3 L1868.2 252.8 L1872.0 241.7" stroke="#2c2cf2" stroke-width="1.35" fill="none" stroke-linejoin="round"/>
<path d="M156.5 852.0 L156.7 851.9 L223.6 851.8 L323.9 851.6 L381.8 851.3 L437.6 851.2 L484.4 851.0 L515.6 850.8 L560.0 850.8 L642.3 850.6 L680.0 850.3 L682.6 849.9 L752.7 849.5 L770.2 849.2 L866.5 848.5 L870.0 848.1 L896.5 848.0 L900.6 847.5 L920.3 847.2 L922.0 847.0 L931.8 846.8 L933.5 846.5 L954.0 846.0 L1001.0 845.5 L1005.0 844.8 L1044.6 844.3 L1110.4 843.2 L1180.0 841.8 L1195.3 841.4 L1200.4 841.1 L1221.6 840.6 L1230.1 840.3 L1247.9 839.7 L1264.9 839.2 L1281.9 838.5 L1301.9 837.9 L1303.1 836.4 L1304.8 836.2 L1315.9 836.0 L1318.4 835.6 L1319.7 835.9 L1330.0 835.6 L1343.1 835.0 L1346.3 834.5 L1347.9 834.9 L1356.3 834.3 L1364.2 834.1 L1366.2 833.6 L1367.4 834.1 L1371.4 833.8 L1375.8 833.9 L1385.7 833.3 L1399.3 832.8 L1411.2 832.4 L1412.4 831.9 L1413.6 832.4 L1417.6 832.1 L1418.5 831.7 L1419.6 832.1 L1430.7 831.5 L1445.4 831.1 L1448.2 830.7 L1449.4 830.9 L1463.8 830.0 L1470.1 829.5 L1473.3 829.5 L1475.7 828.1 L1480.0 827.8 L1493.1 827.0 L1505.3 825.8 L1510.5 825.4 L1516.6 825.0 L1517.7 824.6 L1518.8 825.1 L1523.6 824.3 L1528.8 824.1 L1531.4 823.5 L1535.8 823.2 L1537.5 822.6 L1541.9 822.0 L1547.1 821.7 L1549.3 821.2 L1555.0 820.8 L1558.9 820.1 L1561.2 819.4 L1562.4 819.9 L1567.6 819.6 L1569.3 819.0 L1578.5 817.9 L1588.1 816.8 L1598.5 815.7 L1602.9 814.7 L1607.3 814.4 L1609.9 813.9 L1612.9 813.4 L1614.2 813.6 L1617.3 812.9 L1618.6 813.2 L1623.8 812.3 L1628.2 811.7 L1630.0 811.6 L1631.6 810.8 L1633.2 811.2 L1637.4 811.0 L1639.5 810.6 L1645.3 810.0 L1646.9 810.2 L1652.2 809.4 L1654.3 808.9 L1659.0 808.7 L1664.3 808.2 L1670.1 807.5 L1677.0 806.9 L1678.5 805.6 L1681.9 804.4 L1686.5 803.9 L1690.1 803.6 L1694.4 803.1 L1697.5 802.4 L1703.9 801.9 L1710.2 800.9 L1716.0 800.1 L1719.2 800.0 L1728.1 798.6 L1729.7 797.2 L1731.3 797.8 L1740.3 796.0 L1743.4 795.2 L1751.3 793.8 L1755.0 793.9 L1757.9 792.7 L1759.0 793.2 L1762.5 792.6 L1764.2 791.0 L1765.3 791.6 L1771.1 790.1 L1772.2 790.6 L1775.6 789.9 L1780.2 788.0 L1783.7 787.4 L1785.4 785.7 L1789.4 784.5 L1792.3 783.0 L1795.1 782.2 L1798.6 779.8 L1800.6 778.8 L1800.9 777.1 L1802.0 777.5 L1807.8 776.4 L1811.2 775.8 L1814.1 775.4 L1816.9 774.8 L1821.5 773.1 L1824.4 772.5 L1826.7 770.8 L1829.6 770.3 L1834.0 769.5 L1836.4 768.4 L1839.3 768.0 L1840.2 766.3 L1842.6 765.5 L1848.9 764.3 L1851.3 762.6 L1853.2 762.1 L1855.6 761.8 L1858.5 758.8 L1860.5 757.7 L1863.8 757.1 L1867.2 754.6 L1868.2 754.7 L1872.0 752.5 L1872.0 852.0Z" fill="#1717fb"/>
<path d="M156.5 852H1872" stroke="#5050f0" stroke-width="1"/>
<text transform="translate(102 480) rotate(-90)" text-anchor="middle" font-family="Liberation Serif" font-size="11.5" fill="#444">净值 ($)</text>
<text transform="translate(134 800) rotate(-90)" text-anchor="middle" font-family="Liberation Serif" font-size="11.5" fill="#444">列</text>
</svg>
<div id="bpanel" class="a"></div>
<div class="a" style="left:78px;top:874px;width:1802px;height:2px;background:linear-gradient(#b4b4b4,#c8c8c8)"></div>
<svg class="a" style="left:948px;top:875px" width="64" height="10" viewBox="948 875 64 10">
<path d="M951.2 883H956.8L954 877.6Z" fill="#5e5e5e"/>
<path d="M1001 877.4H1007L1004 882.8Z" fill="#5e5e5e"/>
<path d="M965.5 879.5L966.5 880.5L967.5 879.5M973.5 879.5L974.5 880.5L975.5 879.5M981.5 879.5L982.5 880.5L983.5 879.5M989.5 879.5L990.5 880.5L991.5 879.5" stroke="#777" stroke-width="0.9" fill="none"/>
</svg>
<div class="a btab sel" style="left:80px;width:98px">Simple strategies</div>
<div class="a btab" style="left:182px;width:61px">组合策略</div>
<div id="btb" class="a"></div>
<div class="a" style="left:89px;top:924px;width:14px;height:14px;border:1px solid #8a8a8a;border-radius:2px;background:linear-gradient(#cdcdcd,#bdbdbd)"></div>
<div class="a btn" style="left:119px;width:64px">Save <span style="font-size:9px;color:#6a6a6a">▼</span></div>
<div class="a btn" style="left:193px;width:49px">删除</div>
<div class="a btn" style="left:252px;width:72px">全部删除</div>
<div class="a btn" style="left:333px;width:94px">创建组合策略</div>
<div class="a btn" style="left:437px;width:66px">Set note</div>
<div class="a" style="left:1640px;top:922px;font-size:11px;color:#1e1e1e">选择浏览</div>
<div class="a" style="left:1715px;top:918px;width:98px;height:22px;background:#efefef;border:1px solid #d8d8d8"></div>
<div class="a" style="left:1719px;top:922px;font-size:11px;color:#111">Default(2)</div>
<div class="a" style="left:1801px;top:924px;font-size:9px;color:#666">▼</div>
<div class="a btn" style="left:1822px;top:918px;width:50px;height:23px">管理</div>
<div id="table" class="a"></div>
<div class="a" style="left:80px;top:950px;width:1799px;height:21px;background:#fff"></div>
<div class="a" style="left:80px;top:971px;width:1335px;height:15px;background:linear-gradient(#f7f7f7,#e9e9e9);border-top:1px solid #d6d6d6;border-bottom:1px solid #d0d0d0"></div>
<div class="a" style="left:80px;top:972px;width:40px;height:14px;background:#c8e6f8"></div>
<div class="a" style="left:93px;top:971px;width:14px;height:14px;border:1px solid #7f8b95;border-radius:2px;background:linear-gradient(#c8dbe9,#b0c9dc)"></div>
<div class="a csep" style="left:118px"></div>
<div class="a csep" style="left:288px"></div>
<div class="a csep" style="left:368px"></div>
<div class="a csep" style="left:403px"></div>
<div class="a csep" style="left:503px"></div>
<div class="a csep" style="left:573px"></div>
<div class="a csep" style="left:633px"></div>
<div class="a csep" style="left:693px"></div>
<div class="a csep" style="left:753px"></div>
<div class="a csep" style="left:813px"></div>
<div class="a csep" style="left:873px"></div>
<div class="a csep" style="left:933px"></div>
<div class="a csep" style="left:993px"></div>
<div class="a csep" style="left:1053px"></div>
<div class="a csep" style="left:1113px"></div>
<div class="a csep" style="left:1173px"></div>
<div class="a csep" style="left:1233px"></div>
<div class="a csep" style="left:1293px"></div>
<div class="a csep" style="left:1353px"></div>
<div class="a csep" style="left:1413px"></div>
<div class="a th" style="left:126px">策略名称</div>
<div class="a th" style="left:296px">商品</div>
<div class="a th" style="left:375px">时...</div>
<div class="a th" style="left:410px">净利润</div>
<div class="a th" style="left:510px"># 交易数</div>
<div class="a th" style="left:580px">% 获利</div>
<div class="a th" style="left:640px">盈利比</div>
<div class="a th" style="left:700px">健壮性</div>
<div class="a th" style="left:760px">对称性</div>
<div class="a th" style="left:820px">回撤</div>
<div class="a th" style="left:880px">最大回...</div>
<div class="a th" style="left:941px">盈亏比</div>
<div class="a th" style="left:1000px">盈利/回...</div>
<div class="a th" style="left:1061px">盈利交...</div>
<div class="a th" style="left:1120px">Max ope...</div>
<div class="a th" style="left:1180px">Actual DD</div>
<div class="a th" style="left:1240px">盈利/回...</div>
<div class="a th" style="left:1300px">R 期望值</div>
<div class="a th" style="left:1360px">夏普比率</div>
<div class="a td" style="left:130px;color:#111">ReportTester-7334234</div>
<div class="a td" style="left:300px;color:#111">XAUUSD</div>
<div class="a td" style="left:380px;color:#111">u...</div>
<div class="a td" style="left:415px;color:#2222dd">$ 193376.96</div>
<div class="a td" style="left:515px;color:#111">3034</div>
<div class="a td" style="left:585px;color:#111">76.86%</div>
<div class="a td" style="left:645px;color:#111">3.18</div>
<div class="a td" style="left:705px;color:#111">0.33</div>
<div class="a td" style="left:765px;color:#111">8.53%</div>
<div class="a td" style="left:825px;color:#111">$ 731...</div>
<div class="a td" style="left:885px;color:#111">5.35%</div>
<div class="a td" style="left:945px;color:#111">3.32</div>
<div class="a td" style="left:1005px;color:#111">26.45</div>
<div class="a td" style="left:1065px;color:#111">$ 120.9</div>
<div class="a td" style="left:1125px;color:#111">$ 0.0</div>
<div class="a td" style="left:1185px;color:#111">$ 0.0</div>
<div class="a td" style="left:1245px;color:#111">26.45</div>
<div class="a td" style="left:1305px;color:#111">0.51</div>
<div class="a td" style="left:1365px;color:#111">0.32</div>
<div id="status" class="a"></div>
<div class="a st" style="left:5px;top:1071px">Ready</div>
<div class="a ssep" style="left:1386px"></div>
<div class="a ssep" style="left:1513px"></div>
<div class="a ssep" style="left:1605px"></div>
<div class="a ssep" style="left:1755px"></div>
<div class="a st" style="left:1399px">Simple strategies:</div>
<div class="a st" style="left:1496px">1</div>
<div class="a st" style="left:1527px">Portfolios:</div>
<div class="a st" style="left:1587px">0</div>
<div class="a st" style="left:1618px">Monitor</div>
<svg class="a" style="left:1664px;top:1068px" width="80" height="18" viewBox="0 0 80 18">
<rect width="80" height="18" fill="#0c0c0c"/>
<path d="M0 4.5H80M0 8.5H80M0 12.5H80M4.5 0V18M9.5 0V18M14.5 0V18M19.5 0V18M24.5 0V18M29.5 0V18M34.5 0V18M39.5 0V18M44.5 0V18M49.5 0V18M54.5 0V18M59.5 0V18M64.5 0V18M69.5 0V18M74.5 0V18" stroke="#3c3c3c" stroke-width="1"/>
<path d="M41 10L47 6H71L76 16H41Z" fill="#1e5e1e"/>
<path d="M1 14L8 10H41L47 6H71L76 16" stroke="#3ee83e" stroke-width="1.3" fill="none"/>
<path d="M0 13.5H62" stroke="#30d8e0" stroke-width="1.5"/>
<path d="M0 16.5L4 16L5 2L6 12L7 2L8 15L20 16L32 15L34 5L36 16L42 15L43 1L46 1L47 15L55 16L56 2L58 16L70 15L71 1L73 16L76 16L77 9L79 16" stroke="#f23a12" stroke-width="1.4" fill="none"/>
<path d="M0 17H80" stroke="#f23a12" stroke-width="1.5"/>
</svg>
<div class="a st" style="left:1768px">Used: 491.26 MB</div>
<svg class="a" style="left:1856px;top:1068px" width="28" height="20" viewBox="1856 1068 28 20">
<rect x="1856.5" y="1069.5" width="14" height="3.5" rx="1" fill="#e4e4e4" stroke="#4a4a4a"/>
<path d="M1858 1073.5V1084.5H1869V1073.5" fill="#cfcfcf" stroke="#4a4a4a"/>
<rect x="1860" y="1076" width="7" height="6" fill="#a8d4a8"/>
<g fill="#9a9a9a"><rect x="1880" y="1079" width="1" height="1"/><rect x="1878" y="1082" width="1" height="1"/><rect x="1880" y="1082" width="1" height="1"/><rect x="1876" y="1085" width="1" height="1"/><rect x="1878" y="1085" width="1" height="1"/><rect x="1880" y="1085" width="1" height="1"/></g>
</svg>
<div id="rgap" class="a"></div>
<div id="rborder" class="a"></div>
<div id="lborder" class="a"></div>
<div id="bborder" class="a"></div>
</body></html>
